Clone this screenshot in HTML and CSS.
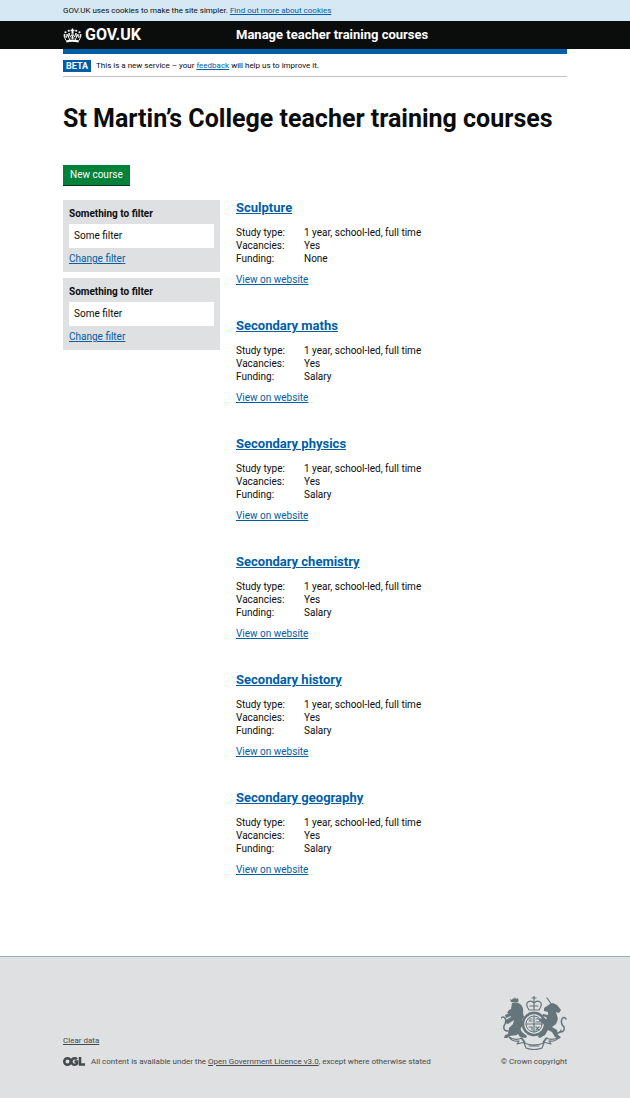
FILE: index.html
```html
<!DOCTYPE html>
<html lang="en">
<head>
<meta charset="utf-8">
<meta name="viewport" content="width=device-width, initial-scale=1">
<title>Manage teacher training courses</title>
<link rel="stylesheet" href="styles.css">
</head>
<body>
<div class="cookie-bar"><div class="container">GOV.UK uses cookies to make the site simpler. <a href="#">Find out more about cookies</a></div></div>
<header class="site-header">
  <div class="container header-grid">
    <a class="logo" href="#">
      <svg class="crown" viewBox="0 0 38 30" aria-hidden="true">
        <g fill="currentColor">
          <circle cx="3" cy="14" r="2"/><circle cx="5" cy="8.500" r="2.200"/><circle cx="11.500" cy="5.500" r="2.200"/>
          <circle cx="35" cy="14" r="2"/><circle cx="33" cy="8.500" r="2.200"/><circle cx="26.500" cy="5.500" r="2.200"/>
          <path d="M17.500 1h3v2.500H23v3h-2.500l1 4.500h-5l1-4.500H15v-3h2.500z"/>
          <path d="M6 25q13-4 26 0l-1 4q-12-3-24 0z"/>
        </g>
        <path d="M6 25 2 16l5 3 1-7 3 7 1-9 3 8 4-7 4 7 3-8 1 9 3-7 1 7 5-3-4 9M12 19l1 5M19 14v8M26 19l-1 5M15 20h8" fill="none" stroke="currentColor" stroke-width="1.800"/>
      </svg>
      <span>GOV.UK</span>
    </a>
    <a class="service-name" href="#">Manage teacher training courses</a>
  </div>
</header>
<div class="container">
  <div class="blue-bar"></div>
  <div class="phase-banner"><strong class="tag">BETA</strong><span>This is a new service – your <a href="#">feedback</a> will help us to improve it.</span></div>
  <main>
    <h1>St Martin’s College teacher training courses</h1>
    <button class="button" type="button">New course</button>
    <div class="columns">
      <aside class="filters">
        <section class="filter"><h2>Something to filter</h2><p>Some filter</p><a href="#">Change filter</a></section>
        <section class="filter"><h2>Something to filter</h2><p>Some filter</p><a href="#">Change filter</a></section>
      </aside>
      <div class="courses">
        <article class="course"><h2><a href="#">Sculpture</a></h2><dl><dt>Study type:</dt><dd>1 year, school-led, full time</dd><dt>Vacancies:</dt><dd>Yes</dd><dt>Funding:</dt><dd>None</dd></dl><a href="#">View on website</a></article>
        <article class="course"><h2><a href="#">Secondary maths</a></h2><dl><dt>Study type:</dt><dd>1 year, school-led, full time</dd><dt>Vacancies:</dt><dd>Yes</dd><dt>Funding:</dt><dd>Salary</dd></dl><a href="#">View on website</a></article>
        <article class="course"><h2><a href="#">Secondary physics</a></h2><dl><dt>Study type:</dt><dd>1 year, school-led, full time</dd><dt>Vacancies:</dt><dd>Yes</dd><dt>Funding:</dt><dd>Salary</dd></dl><a href="#">View on website</a></article>
        <article class="course"><h2><a href="#">Secondary chemistry</a></h2><dl><dt>Study type:</dt><dd>1 year, school-led, full time</dd><dt>Vacancies:</dt><dd>Yes</dd><dt>Funding:</dt><dd>Salary</dd></dl><a href="#">View on website</a></article>
        <article class="course"><h2><a href="#">Secondary history</a></h2><dl><dt>Study type:</dt><dd>1 year, school-led, full time</dd><dt>Vacancies:</dt><dd>Yes</dd><dt>Funding:</dt><dd>Salary</dd></dl><a href="#">View on website</a></article>
        <article class="course"><h2><a href="#">Secondary geography</a></h2><dl><dt>Study type:</dt><dd>1 year, school-led, full time</dd><dt>Vacancies:</dt><dd>Yes</dd><dt>Funding:</dt><dd>Salary</dd></dl><a href="#">View on website</a></article>
      </div>
    </div>
  </main>
</div>
<footer class="site-footer">
  <div class="container footer-row">
    <div class="footer-meta">
      <a href="#">Clear data</a>
      <div class="licence">
        <svg class="ogl" viewBox="0 0 44 18" role="img" aria-label="OGL"><g fill="none" stroke="currentColor" stroke-width="5"><circle cx="9" cy="9" r="6.500"/><path d="M28 4.500A6.500 6.500 0 1 0 28 13.500V9h-5M34 0v15h10"/></g></svg>
        <span>All content is available under the <a href="#">Open Government Licence v3.0</a>, except where otherwise stated</span>
      </div>
    </div>
    <a class="copyright" href="#">
      <svg class="crest" viewBox="0 0 66 54" aria-hidden="true">
        <g fill="currentColor">
          <path d="m10 6-1-3 2 1 1-2 1 1 1-2 1 2 2-1v2l1-1-1 3z"/>
          <path d="M11 7q5-2 8 1 4 3 3 9l1 4-2 3 1 4-3 6-3 5-7 1-3 2H3l1-3 3-1 1-6 4-4 1-4-6 4-3-1 1-3 5-3-1-3-3-1 2-3 2-1z"/>
          <path d="m17 29 4 7 5 4-1 2-6-1-4-6zM4 19l7-3 1 3-7 3z"/>
          <path d="m49 8 3-1 4 2 4 5-2 3-3-1 2 7-2 5-4 3 5 3 1 5 3 2-2 2-4-2-3-5-4-2-3 5-5 3-2-1 1-3 4-3 2-6-4-3-2-3 4-1 4 1-1-2-4-1 1-2 5 1v-3l-4-1v-3z"/>
        </g>
        <g fill="none" stroke="currentColor" stroke-linecap="round" stroke-linejoin="round">
          <path stroke-width="1.200" d="M33 0v5M31 2h4M28 14q-4-6-1-8 3-2 6 1 3-3 6-1 3 2-1 8zM33 6v8M29 10h8M28 17h10"/>
          <circle cx="33" cy="28" r="11" stroke-width="2.500" stroke-dasharray="1.600 .6"/>
          <circle cx="33" cy="28" r="8"/>
          <path stroke-width="1.200" d="M33 20v16M25 28h16M28 23h3M28 25h3M35 23q4-1 4 3h-4M28 31h3v3M35 31l3 3M38 31l-3 3"/>
          <path stroke-width="1.500" d="M7 35q-5 0-4-5 3-5 1-8-2-2-4 0M59 36q5 0 4-5-4-4-2-8 2-3 4 0"/>
          <path stroke-width="1.200" d="M8 41q6 4 13 1l3 4-8 2 2-3q-7 1-10-4zM58 41q-6 4-13 1l-3 4 8 2-2-3q7 1 10-4zM20 42l3 4M46 42l-3 4M23 47q10 4 20 0l-2 5q-8 3-16 0zM28 50h10"/>
          <path stroke-width="1.200" d="m46 2 5 7M54 37q5 1 6-3"/>
        </g>
      </svg>
      <span>© Crown copyright</span>
    </a>
  </div>
</footer>
</body>
</html>
```
FILE: styles.css
```css
* { box-sizing: border-box; }
body { margin: 0; font: 10px/13px Roboto, "Liberation Sans", sans-serif; color: #0b0c0c; background: #fff; }
h1, h2, p, dl, dd { margin: 0; }
a { color: #005ea5; }
.container { margin: 0 10%; }
.cookie-bar { padding: 4px 0; background: #d5e8f3; font-size: 8px; }
.site-header { background: #0b0c0c; padding: 4px 0; }
.header-grid, .columns { display: grid; grid-template-columns: 157px 1fr; column-gap: 16px; }
.header-grid { align-items: center; line-height: 20px; }
.logo, .service-name { color: #fff; text-decoration: none; font-weight: 700; }
.logo { display: flex; align-items: center; gap: 3px; font-size: 16px; }
.crown { width: 19px; height: 15px; }
.service-name { font-size: 13px; }
.blue-bar { height: 5px; background: #005ea5; }
.phase-banner { display: flex; align-items: center; gap: 5px; padding: 5px 0 4px; border-bottom: 1px solid #bfc1c3; font-size: 8px; }
.tag { padding: 0 3px; background: #005ea5; color: #fff; font-size: 9px; line-height: 12px; }
h1 { margin: 26px 0 30px; font-size: 25px; line-height: 32px; }
.button { display: block; border: 0; border-bottom: 1px solid #003618; border-radius: 0; background: #00823b; color: #fff; font: 10px/20px Roboto, "Liberation Sans", sans-serif; padding: 0 7px; }
.columns { margin-top: 14px; }
.filters { display: grid; gap: 6px; align-content: start; }
.filter { padding: 7px 6px; background: #dee0e2; }
.filter h2 { font-size: 10px; line-height: 13px; }
.filter p { margin: 4px 0; padding: 5px 5px 6px; background: #fff; }
.course { margin-bottom: 32px; }
.course h2 { font-size: 13px; line-height: 15px; }
.course dl { display: grid; grid-template-columns: 68px 1fr; margin: 11px 0 8px; }
.site-footer { margin-top: 48px; padding: 39px 0 30px; border-top: 1px solid #a1acb2; background: #dee0e2; color: #454a4c; font-size: 8px; }
.site-footer a { color: #454a4c; }
.footer-row { display: flex; justify-content: space-between; align-items: flex-end; }
.footer-meta { display: grid; gap: 8px; }
.licence { display: flex; align-items: center; gap: 6px; }
.ogl { width: 22px; height: 9px; }
.site-footer .copyright { display: grid; justify-items: end; gap: 5px; text-decoration: none; }
.crest { width: 66px; height: 54px; color: #65757a; }
```
